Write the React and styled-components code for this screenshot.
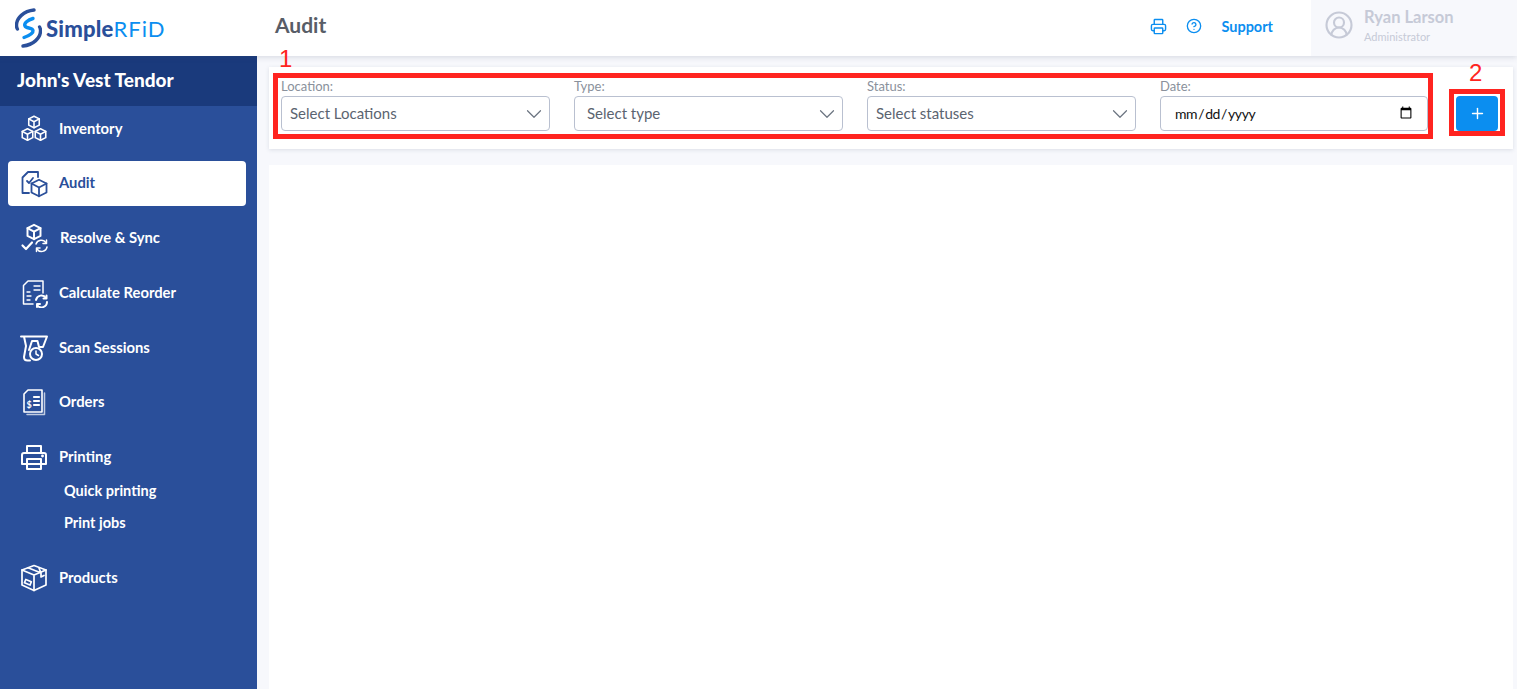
import React from "react";
import styled, { createGlobalStyle } from "styled-components";
import { ChevronDown, CircleHelp, CircleUserRound, Plus, Printer } from "lucide-react";

const GlobalStyle = createGlobalStyle`
  html, body {
    margin: 0;
    height: 100%;
    overflow: hidden;
    background: #f7f8fc;
    font-family: "Lato", "Open Sans", sans-serif;
  }
  * {
    box-sizing: border-box;
  }
`;

const NavIcon = ({ children }) => (
  <svg width="30" height="30" viewBox="0 0 30 30" fill="none" stroke="currentColor" strokeWidth="1.5" strokeLinejoin="round" strokeLinecap="round">
    {children}
  </svg>
);

const Cube = ({ x, y, s = 1 }) => (
  <g transform={`translate(${x} ${y}) scale(${s})`}>
    <path d="M0 -5.5 L5 -3 V3 L0 5.5 L-5 3 V-3 Z" />
    <path d="M-5 -3 L0 -0.3 L5 -3 M0 -0.3 V5.5" />
  </g>
);

const icons = {
  inventory: (
    <NavIcon>
      <Cube x={15} y={8} s={1.05} />
      <Cube x={8.5} y={20.5} s={1.05} />
      <Cube x={21.5} y={20.5} s={1.05} />
    </NavIcon>
  ),
  audit: (
    <NavIcon>
      <g strokeWidth="1.8">
        <path d="M9 4 H19 V9 M9 4 L3.5 9.5 V25 H10" />
        <path d="M8 13 L10 15 L14 10" />
      </g>
      <g strokeWidth="1.2">
        <Cube x={20} y={20} s={1.5} />
      </g>
    </NavIcon>
  ),
  resolve: (
    <NavIcon>
      <Cube x={15} y={9} s={1.3} />
      <path d="M3.5 22.5 L7 26 L13 19.5" strokeWidth="2.2" />
      <path d="M17 21 A5.5 5.5 0 0 1 27 20 M28 24 A5.5 5.5 0 0 1 18 26" />
      <path d="M27.5 17 V20.5 H24 M17.5 28.5 V25 H21" />
    </NavIcon>
  ),
  calculate: (
    <NavIcon>
      <path d="M9 3 H24 V15 M9 3 L4.5 7.5 V26 H14" />
      <path d="M15 8 H21 M15 12 H21 M8 14 H11 M8 18 H12 M8 22 H11" strokeWidth="1.3" />
      <g strokeWidth="2">
        <path d="M17 22 A5.5 5.5 0 0 1 27 20 M28 24 A5.5 5.5 0 0 1 18 27" />
        <path d="M27.5 17.5 V20.5 H24.5 M18 29 V26 H21" />
      </g>
    </NavIcon>
  ),
  scan: (
    <NavIcon>
      <g strokeWidth="2">
        <path d="M2 3.5 H28 L24 14 H20 L18.5 8 H13 L10 17 M5 3.5 L7 13 L5 24 Q5 27.5 8.5 27.5 H11" />
        <circle cx="17" cy="21" r="6" />
        <path d="M17 18 V21 L19.5 22.5" strokeWidth="1.5" />
      </g>
    </NavIcon>
  ),
  orders: (
    <NavIcon>
      <path d="M9 3 H23 V25 H5 V7 Z" strokeWidth="1.6" />
      <path d="M25.5 6 V27.5 H8" strokeOpacity="0.7" />
      <path d="M15 10 H20 M15 14 H20 M15 18 H20" strokeWidth="2.2" />
      <text x="7.5" y="21" fontSize="9" fontWeight="700" fill="currentColor" stroke="none" fontFamily="Lato">$</text>
    </NavIcon>
  ),
  printing: (
    <NavIcon>
      <g strokeWidth="2">
        <path d="M8 11 V4 H22 V11" />
        <path d="M7 22 H3 V13 Q3 11 5 11 H25 Q27 11 27 13 V22 H23" />
        <path d="M8 17 H22 V27 H8 Z M8 22 H22" />
      </g>
      <circle cx="23.5" cy="14" r="0.7" fill="currentColor" />
    </NavIcon>
  ),
  products: (
    <NavIcon>
      <g strokeWidth="1.7">
        <path d="M15 2.5 L27 7 V22 L15 27.5 L3 22 V7 Z" />
        <path d="M3 7 L15 12 L27 7 M15 12 V27.5" />
        <path d="M9 4.8 L21 9.5 M20 5 L22 10 V14 L25 12.5" />
        <rect x="6" y="17.5" width="6" height="3.6" transform="rotate(22 9 19)" />
      </g>
    </NavIcon>
  ),
};

const navItems = [
  { label: "Inventory", icon: "inventory" },
  { label: "Audit", icon: "audit", active: true },
  { label: "Resolve & Sync", icon: "resolve", nudge: 1 },
  { label: "Calculate Reorder", icon: "calculate" },
  { label: "Scan Sessions", icon: "scan" },
  { label: "Orders", icon: "orders" },
  { label: "Printing", icon: "printing", children: ["Quick printing", "Print jobs"] },
  { label: "Products", icon: "products" },
];

const filters = [
  { label: "Location:", placeholder: "Select Locations", inset: 8 },
  { label: "Type:", placeholder: "Select type", inset: 12 },
  { label: "Status:", placeholder: "Select statuses", inset: 8 },
];

export default function App() {
  return (
    <>
      <GlobalStyle />
      <Page>
        <Header>
          <LogoArea>
            <svg width="27" height="40" viewBox="0 0 27 40" fill="none" strokeLinecap="round">
              <path d="M19 2 C9 3 1 10 1.5 18 C1.6 19 1.8 20 2.4 21" stroke="#2a4f9a" strokeWidth="3.4" />
              <path d="M8 38 C18 37 26 30 25.5 22 C25.4 21 25.2 20 24.6 19" stroke="#2a4f9a" strokeWidth="3.4" />
              <path d="M18 10.5 C13 12 8.5 15 10 18 C11 20.5 17.5 19.5 18 22.5 C18.5 25.5 13 28 9 29.5" stroke="#0b8ef0" strokeWidth="3.4" />
            </svg>
            <LogoText>Simple<span>RFiD</span></LogoText>
          </LogoArea>
          <PageTitle>Audit</PageTitle>
          <HeaderActions>
            <Printer size={17} strokeWidth={2} />
            <CircleHelp size={16} strokeWidth={2} />
            <SupportLink>Support</SupportLink>
          </HeaderActions>
          <Profile>
            <CircleUserRound size={30} strokeWidth={1.7} />
            <div>
              <ProfileName>Ryan Larson</ProfileName>
              <ProfileRole>Administrator</ProfileRole>
            </div>
          </Profile>
        </Header>
        <Body>
          <Sidebar>
            <CompanyName>John's Vest Tendor</CompanyName>
            <NavList>
              {navItems.map((item) => (
                <li key={item.label}>
                  <NavRow $active={item.active} $nudge={item.nudge}>
                    {icons[item.icon]}
                    <span>{item.label}</span>
                  </NavRow>
                  {item.children && (
                    <SubList>
                      {item.children.map((child) => (
                        <SubRow key={child}>{child}</SubRow>
                      ))}
                    </SubList>
                  )}
                </li>
              ))}
            </NavList>
          </Sidebar>
          <Main>
            <FilterCard>
              <Marker $left={4} $top={6} $width={1160} $height={66}>
                <MarkerNumber $left={1} $top={-31}>1</MarkerNumber>
              </Marker>
              <Marker $left={1180} $top={22} $width={56} $height={47}>
                <MarkerNumber $left={15} $top={-33}>2</MarkerNumber>
              </Marker>
              <FilterGrid>
                {filters.map((f) => (
                  <Field key={f.label}>
                    <FieldLabel>{f.label}</FieldLabel>
                    <SelectBox $inset={f.inset}>
                      {f.placeholder}
                      <ChevronDown size={26} strokeWidth={1.1} color="#6b7480" />
                    </SelectBox>
                  </Field>
                ))}
                <Field>
                  <FieldLabel>Date:</FieldLabel>
                  <DateInput type="date" />
                </Field>
              </FilterGrid>
              <AddButton aria-label="Add">
                <Plus size={17} strokeWidth={2} />
              </AddButton>
            </FilterCard>
            <ContentCard />
          </Main>
        </Body>
      </Page>
    </>
  );
}

const Page = styled.div`
  height: 689px;
  display: flex;
  flex-direction: column;
  overflow: hidden;
`;

const Header = styled.header`
  height: 56px;
  flex-shrink: 0;
  display: flex;
  align-items: center;
  background: #fff;
  box-shadow: 0 1px 6px rgba(60, 70, 100, 0.18);
  position: relative;
  z-index: 2;
`;

const LogoArea = styled.div`
  width: 257px;
  padding: 0 0 0 15px;
  display: flex;
  align-items: center;
  gap: 4px;
`;

const LogoText = styled.div`
  font-size: 22px;
  font-weight: 900;
  letter-spacing: 0.2px;
  color: #2a4f9a;
  margin-top: 1px;
  span {
    font-weight: 400;
    color: #0b8ef0;
    letter-spacing: 1px;
  }
`;

const PageTitle = styled.h1`
  margin: -8px 0 0 18px;
  font-size: 21px;
  font-weight: 700;
  color: #585d67;
`;

const HeaderActions = styled.div`
  margin: -4px 0 0 auto;
  display: flex;
  align-items: center;
  gap: 19px;
  color: #0b8ef0;
`;

const SupportLink = styled.span`
  margin-left: 0;
  font-size: 14.5px;
  font-weight: 700;
`;

const Profile = styled.div`
  width: 206px;
  height: 56px;
  margin-left: 38px;
  padding: 0 0 6px 13px;
  display: flex;
  align-items: center;
  gap: 10px;
  background: #f7f8fc;
  color: #c6cad7;
`;

const ProfileName = styled.div`
  font-size: 16.5px;
  font-weight: 700;
  line-height: 20px;
`;

const ProfileRole = styled.div`
  font-size: 11px;
  font-weight: 400;
  line-height: 14px;
  margin-top: 3px;
`;

const Body = styled.div`
  flex: 1;
  display: flex;
  min-height: 0;
`;

const Sidebar = styled.aside`
  width: 257px;
  flex-shrink: 0;
  background: #2a4f9a;
  color: #fff;
`;

const CompanyName = styled.div`
  height: 50px;
  padding: 0 0 3px 17px;
  display: flex;
  align-items: center;
  background: #1a3a7c;
  font-size: 19px;
  font-weight: 900;
`;

const NavList = styled.ul`
  list-style: none;
  margin: 0;
  padding: 0 11px 0 8px;
  display: flex;
  flex-direction: column;
  gap: 9.8px;
`;

const NavRow = styled.div`
  height: 45px;
  padding-left: 11px;
  display: flex;
  align-items: center;
  gap: ${(p) => (p.$nudge ? 11 : 10)}px;
  border-radius: 4px;
  font-size: 14.8px;
  font-weight: 700;
  background: ${(p) => (p.$active ? "#fff" : "transparent")};
  color: ${(p) => (p.$active ? "#2a4f9a" : "#fff")};
  span {
    margin-top: -2px;
  }
  svg {
    flex-shrink: 0;
  }
`;

const SubList = styled.div`
  padding: 0 0 7px 56px;
  margin-top: -5px;
`;

const SubRow = styled.div`
  height: 32px;
  display: flex;
  align-items: center;
  font-size: 14.5px;
  font-weight: 700;
`;

const Main = styled.main`
  flex: 1;
  min-width: 0;
  padding: 11px 4px 0 12px;
  display: flex;
  flex-direction: column;
`;

const FilterCard = styled.section`
  position: relative;
  z-index: 3;
  height: 82px;
  flex-shrink: 0;
  padding: 13px 15px 0 12px;
  display: flex;
  gap: 28px;
  background: #fff;
  box-shadow: 0 1px 4px rgba(60, 70, 100, 0.14);
`;

const FilterGrid = styled.div`
  flex: 1;
  display: grid;
  grid-template-columns: repeat(3, 269px) 268px;
  gap: 24px;
`;

const Field = styled.div`
  display: flex;
  flex-direction: column;
`;

const FieldLabel = styled.label`
  height: 16px;
  font-size: 13px;
  line-height: 13px;
  color: #8a919c;
`;

const SelectBox = styled.div`
  height: 35px;
  padding: 0 2px 1px ${(p) => p.$inset}px;
  display: flex;
  align-items: center;
  justify-content: space-between;
  border: 1px solid #b9c0d0;
  border-radius: 4px;
  background: #fff;
  font-size: 15px;
  line-height: 18px;
  color: #5b6470;
  svg {
    margin-bottom: -1px;
  }
`;

const DateInput = styled.input`
  height: 35px;
  width: 100%;
  padding: 0 12px 1px 13px;
  border: 1px solid #b9c0d0;
  border-radius: 4px;
  background: #fff;
  font-family: inherit;
  font-size: 14px;
  letter-spacing: -0.4px;
  color: #111;
`;

const AddButton = styled.button`
  width: 42px;
  height: 35px;
  flex-shrink: 0;
  margin-top: 16px;
  padding: 0;
  display: flex;
  align-items: center;
  justify-content: center;
  border: 0;
  border-radius: 4px;
  background: #0b8ef0;
  color: #fff;
`;

const Marker = styled.div`
  position: absolute;
  left: ${(p) => p.$left}px;
  top: ${(p) => p.$top}px;
  width: ${(p) => p.$width}px;
  height: ${(p) => p.$height}px;
  border: 5px solid #ff2420;
  pointer-events: none;
`;

const MarkerNumber = styled.span`
  position: absolute;
  left: ${(p) => p.$left}px;
  top: ${(p) => p.$top}px;
  font-family: "Liberation Sans", sans-serif;
  font-size: 24px;
  line-height: 24px;
  color: #ff2420;
`;

const ContentCard = styled.section`
  flex: 1;
  margin-top: 16px;
  background: #fff;
`;
